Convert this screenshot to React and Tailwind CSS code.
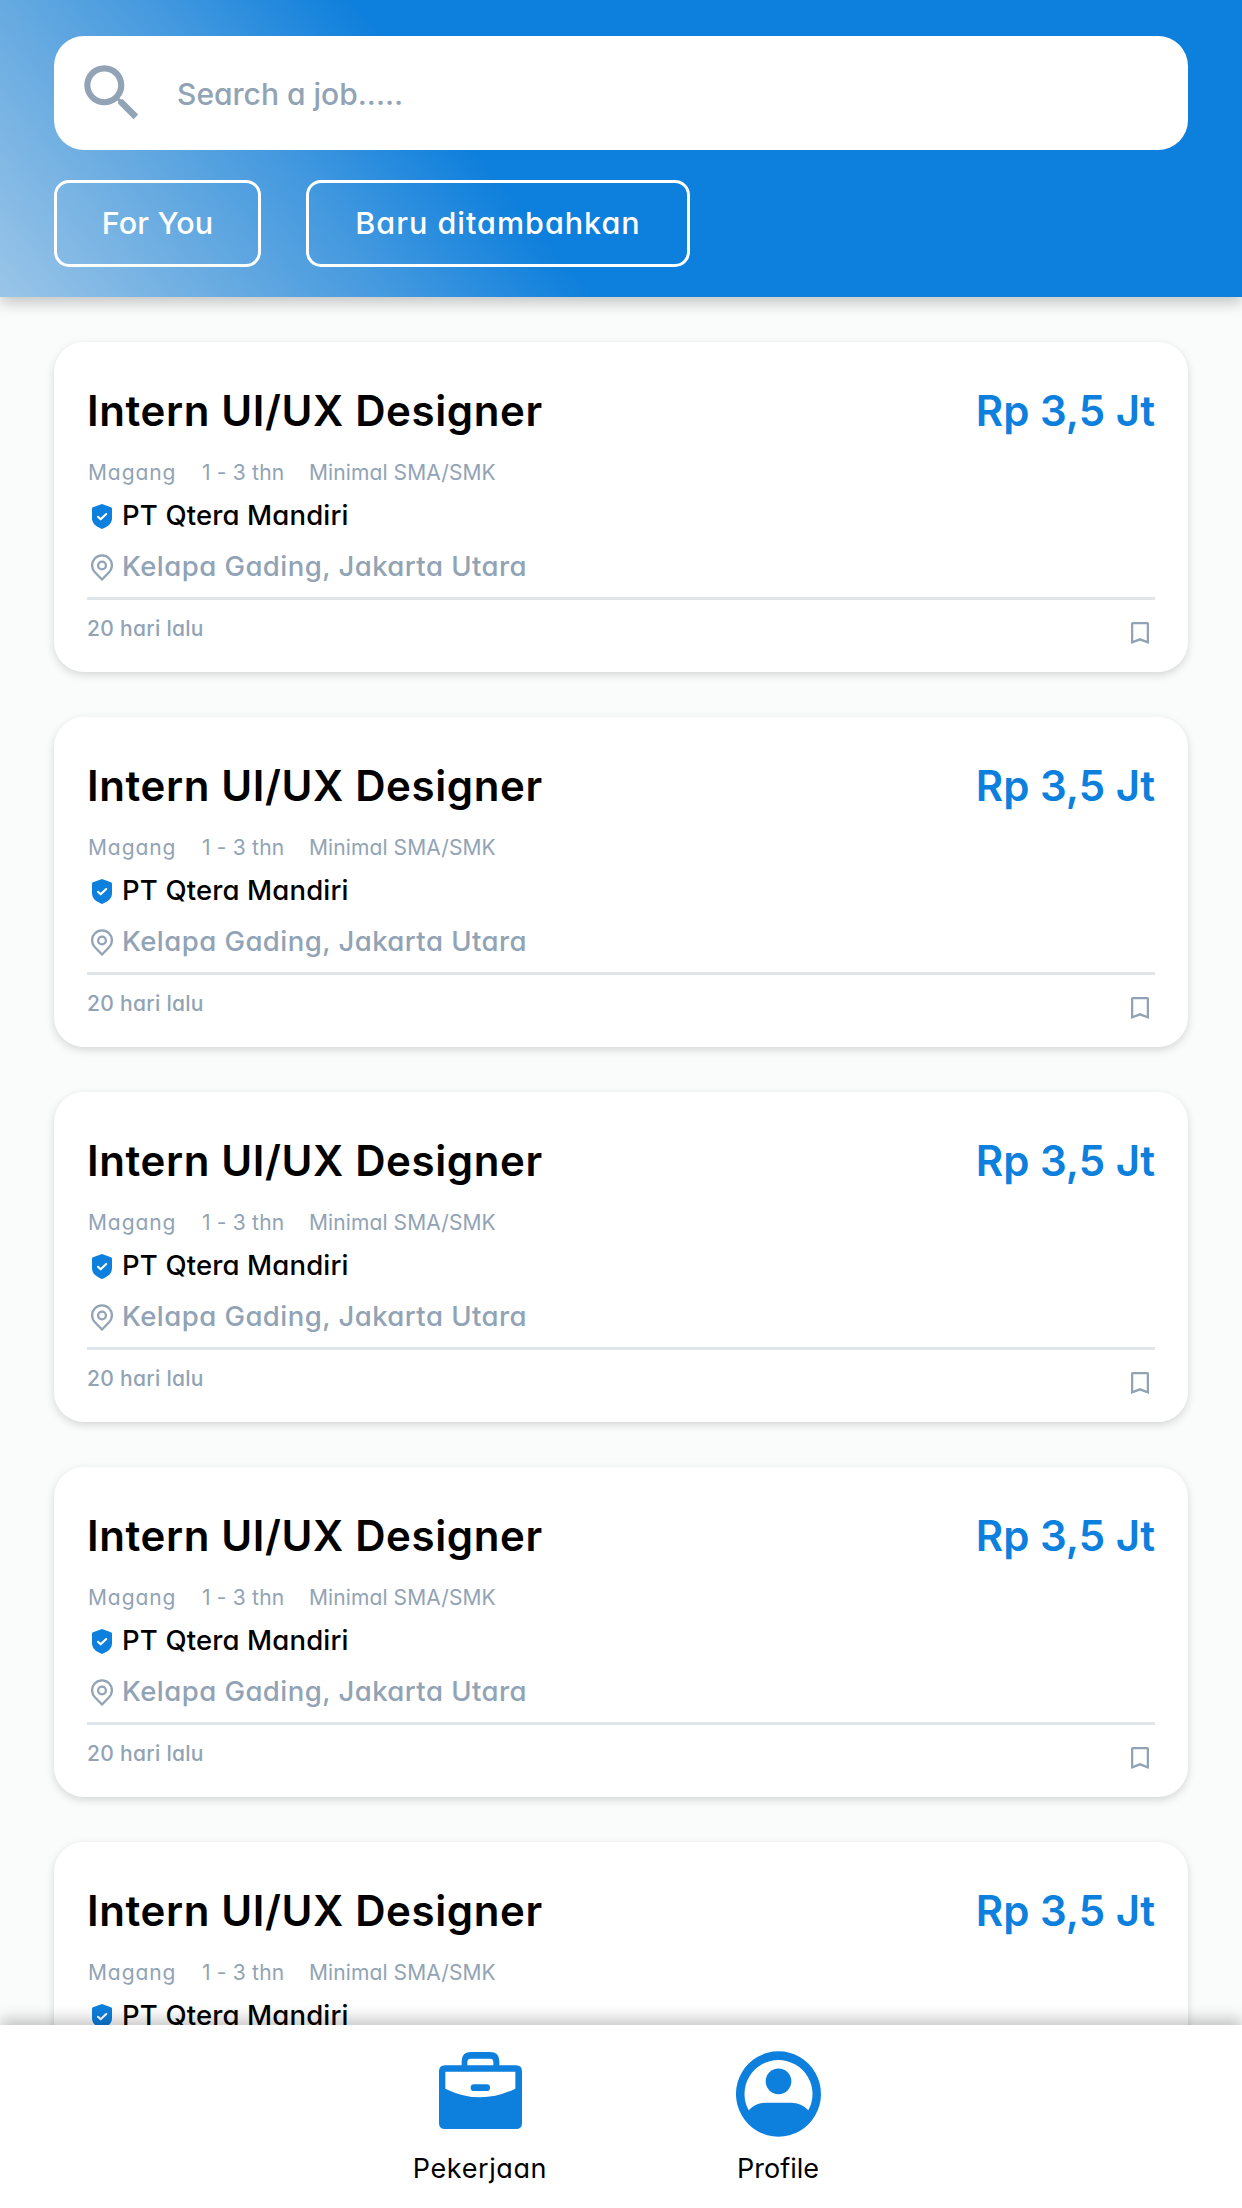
import React from "react";
import { MdSearch } from "react-icons/md";

const jobs = Array.from({ length: 5 }, (_, id) => ({
  id,
  title: "Intern UI/UX Designer",
  salary: "Rp 3,5 Jt",
  type: "Magang",
  experience: "1 - 3 thn",
  education: "Minimal SMA/SMK",
  company: "PT Qtera Mandiri",
  location: "Kelapa Gading, Jakarta Utara",
  posted: "20 hari lalu",
}));

function ShieldIcon() {
  return (
    <svg viewBox="0 0 20 25" className="h-[25px] w-5 shrink-0">
      <path
        d="M10 0 L18.9 3.2 Q20 3.6 20 4.8 V14 C20 19.5 16 22.6 10 25 C4 22.6 0 19.5 0 14 V4.8 Q0 3.6 1.1 3.2 Z"
        fill="#0d7fdc"
      />
      <path
        d="M6 12.8 L8.7 15.3 L14.2 10"
        fill="none"
        stroke="#fff"
        strokeWidth="2.1"
        strokeLinecap="round"
        strokeLinejoin="round"
      />
    </svg>
  );
}

function PinIcon() {
  return (
    <svg viewBox="0 0 22 27" className="h-[27px] w-[22px] shrink-0" fill="none" stroke="#91a3b5" strokeWidth="2.3">
      <path d="M11 25.5 L3.9 18.2 A9.9 9.9 0 1 1 18.1 18.2 Z" />
      <circle cx="11" cy="11.5" r="3.9" />
    </svg>
  );
}

function BookmarkIcon() {
  return (
    <svg viewBox="0 0 18 22" className="h-[22px] w-[18px] shrink-0" fill="none" stroke="#91a3b5" strokeWidth="2.3">
      <path d="M1.1 20.3 V2.1 Q1.1 1.1 2.1 1.1 H15.9 Q16.9 1.1 16.9 2.1 V20.3 L9 17.3 Z" />
    </svg>
  );
}

function BriefcaseIcon() {
  return (
    <svg viewBox="0 0 249 231" className="h-[77px] w-[83px]" fill="#0d7fdc">
      <path
        fillRule="evenodd"
        d="M68 40 V28 Q68 0 96 0 H153 Q181 0 181 28 V40 H231 Q249 40 249 58 V213 Q249 231 231 231 H18 Q0 231 0 213 V58 Q0 40 18 40 Z M85 40 H163 V30 Q163 20 153 20 H95 Q85 20 85 30 Z M19 59 V110 Q124 162 229 110 V59 Z"
      />
      <rect x="95" y="97" width="58" height="20" rx="10" />
    </svg>
  );
}

function AccountIcon() {
  return (
    <svg viewBox="0 0 255 258" className="h-[86px] w-[85px]" fill="#0d7fdc">
      <path
        fillRule="evenodd"
        d="M127.5 1 A127.5 128 0 1 1 127.4 1 Z M127.5 27 A102 102 0 0 0 38 178 Q58 155 90 155 H165 Q197 155 217 178 A102 102 0 0 0 127.5 27 Z"
      />
      <circle cx="127.5" cy="91" r="38.5" />
    </svg>
  );
}

function JobCard({ job }) {
  return (
    <article className="h-[330px] shrink-0 rounded-[30px] bg-white pt-[39px] pr-[33px] pl-[33px] shadow-[0_3px_8px_rgba(0,0,0,0.15)]">
      <div className="flex h-[60px] items-center justify-between text-[42px] leading-[60px] font-semibold">
        <h2 className="tracking-[0.62px] text-black">{job.title}</h2>
        <span className="text-[#0d7fdc]">{job.salary}</span>
      </div>
      <div className="mt-[12px] flex h-10 items-center pl-px text-[21px] leading-10 text-[#91a3b5]">
        <span className="w-[114px] tracking-[0.9px]">{job.type}</span>
        <span className="w-[107px] tracking-[0.2px]">{job.experience}</span>
        <span className="tracking-[0.1px]">{job.education}</span>
      </div>
      <div className="mt-[3px] flex h-10 items-center pl-[5px] text-[27.5px] leading-10 font-medium text-black">
        <ShieldIcon />
        <span className="ml-[10px] pb-[2px] tracking-[0.15px]">{job.company}</span>
      </div>
      <div className="mt-[11px] flex h-10 items-center pl-1 text-[27.5px] leading-10 font-medium text-[#91a3b5]">
        <PinIcon />
        <span className="ml-[9px] pb-[2px] tracking-[0.45px]">{job.location}</span>
      </div>
      <div className="mt-[10px] flex justify-between border-t-[3px] border-[#dfe5e9] pt-[9px] pr-[6px]">
        <span className="text-[21px] leading-10 font-medium tracking-[0.3px] text-[#91a3b5]">
          {job.posted}
        </span>
        <span className="pt-[13px]">
          <BookmarkIcon />
        </span>
      </div>
    </article>
  );
}

export default function App() {
  return (
    <div className="flex h-[2208px] w-[1242px] flex-col overflow-hidden bg-[#fafcfb] font-[Inter,sans-serif] [font-feature-settings:'cv11']">
      <header className="z-10 h-[297px] shrink-0 bg-[linear-gradient(51deg,#9ac5e8_0px,#66aae1_187px,#4499df_305px,#0d7fdc_463px)] px-[54px] pt-9 shadow-[0_6px_14px_rgba(0,0,0,0.22)]">
        <div className="flex h-[114px] items-center rounded-[30px] bg-white pl-[21px]">
          <MdSearch className="size-[74px] text-[#91a3b5]" />
          <span className="ml-[28px] pt-[2px] text-[30px] leading-none font-medium text-[#91a3b5]">
            Search a job.....
          </span>
        </div>
        <div className="mt-[30px] flex gap-[45px] text-[30.5px] font-medium text-white">
          <button className="h-[87px] w-[207px] rounded-[15px] border-[3px] border-white pb-[2px] tracking-[0.1px]">
            For You
          </button>
          <button className="h-[87px] w-[384px] rounded-[15px] border-[3px] border-white pb-[2px] tracking-[1px]">
            Baru ditambahkan
          </button>
        </div>
      </header>

      <main className="flex min-h-0 flex-1 flex-col gap-[45px] overflow-hidden px-[54px] pt-[45px]">
        {jobs.map((job) => (
          <JobCard key={job.id} job={job} />
        ))}
      </main>

      <nav className="z-10 flex h-[183px] shrink-0 justify-center bg-white pl-4 text-[27px] text-black shadow-[0_-6px_14px_rgba(0,0,0,0.22)]">
        <div className="flex w-[298px] flex-col items-center pt-[27px]">
          <BriefcaseIcon />
          <span className="mt-[20px] leading-10 tracking-[0.6px]">Pekerjaan</span>
        </div>
        <div className="flex w-[298px] flex-col items-center pt-[26px]">
          <AccountIcon />
          <span className="mt-[12px] leading-10">Profile</span>
        </div>
      </nav>
    </div>
  );
}
